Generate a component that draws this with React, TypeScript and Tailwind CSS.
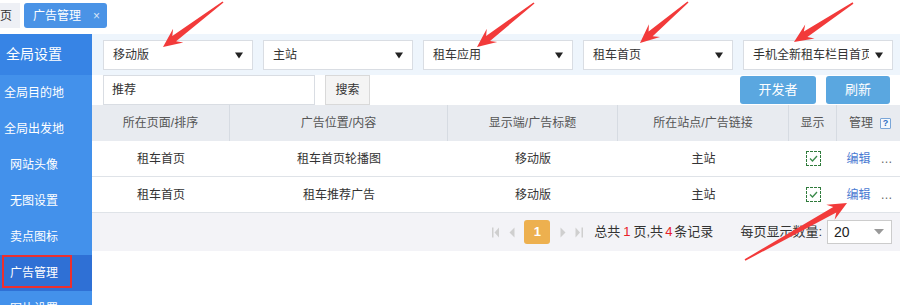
import React from "react";

const FONT = '"Liberation Sans", "Noto Sans CJK SC", sans-serif';

function arrowPoints(tx: number, ty: number, px: number, py: number) {
  const headLen = 19;
  const wing = 8.5;
  const neck = 3.2;
  const tail = 0.8;
  const dx = px - tx;
  const dy = py - ty;
  const L = Math.hypot(dx, dy);
  const ux = dx / L;
  const uy = dy / L;
  const nx = -uy;
  const ny = ux;
  const wx = px - ux * headLen;
  const wy = py - uy * headLen;
  const kx = px - ux * (headLen - 5);
  const ky = py - uy * (headLen - 5);
  const pts = [
    [tx + nx * tail, ty + ny * tail],
    [kx + nx * neck, ky + ny * neck],
    [wx + nx * wing, wy + ny * wing],
    [px, py],
    [wx - nx * wing, wy - ny * wing],
    [kx - nx * neck, ky - ny * neck],
    [tx - nx * tail, ty - ny * tail],
  ];
  return pts.map((p) => `${p[0].toFixed(1)},${p[1].toFixed(1)}`).join(" ");
}

const arrows: [number, number, number, number][] = [
  [223, 2, 163, 47],
  [534, 3, 477, 47],
  [688, 2, 640, 43],
  [853, 3, 794, 42],
  [745, 260, 847, 203],
];

function Caret() {
  return (
    <svg width="8" height="7" viewBox="0 0 8 7" className="shrink-0">
      <path d="M0 0.5 H8 L4 6.5 Z" fill="#222" />
    </svg>
  );
}

function Select({ label }: { label: string }) {
  return (
    <div className="w-[150px] h-[30px] bg-white border border-[#d9dde3] flex items-center pl-[9px] pr-[9px] text-[12px] text-[#333]">
      <div className="flex-1 overflow-hidden whitespace-nowrap">{label}</div>
      <div className="ml-[6px]">
        <Caret />
      </div>
    </div>
  );
}

const sideItems = ["全局目的地", "全局出发地", "网站头像", "无图设置", "卖点图标", "广告管理", "图片设置"];

function Check() {
  return (
    <div className="w-[15px] h-[15px] border border-dashed border-[#2f7a3b] flex items-center justify-center">
      <svg width="9" height="7" viewBox="0 0 9 7">
        <path d="M1 3.5 L3.5 6 L8 1" stroke="#3a8a4a" strokeWidth="1.3" fill="none" />
      </svg>
    </div>
  );
}

const rows = [
  ["租车首页", "租车首页轮播图", "移动版", "主站"],
  ["租车首页", "租车推荐广告", "移动版", "主站"],
];

export default function App() {
  return (
    <div className="relative w-[900px] h-[305px] overflow-hidden bg-white" style={{ fontFamily: FONT }}>
      {/* tab bar */}
      <div className="h-[34px] flex items-start pt-[3px]">
        <div className="w-[20px] h-[25px] bg-[#eef0f5] flex items-center justify-end pr-[8px] text-[12px] text-[#333]">页</div>
        <div className="ml-[4px] w-[83px] h-[25px] rounded-[3px] bg-[#4a93e6] flex items-center pl-[9px] text-[12px] text-white">
          <span>广告管理</span>
          <span className="ml-[12px] text-[12px] text-[#d6e6f8]">×</span>
        </div>
      </div>

      <div className="flex h-[271px]">
        {/* sidebar */}
        <div className="w-[92px] shrink-0 bg-[#4391eb] text-white">
          <div className="h-[41px] bg-[#3784e5] flex items-center">
            <div className="w-[68px] text-center text-[14px]">全局设置</div>
          </div>
          {sideItems.map((s, i) => (
            <div
              key={s}
              className={
                "relative h-[36px] flex items-center text-[12px] " + (i === 5 ? "bg-[#2f70d5]" : "")
              }
            >
              <div className="w-[68px] text-center">{s}</div>
              {i === 5 && (
                <div className="absolute left-[2px] top-0 w-[70px] h-[33px] border-[2.5px] border-[#ec2f2f]" />
              )}
            </div>
          ))}
        </div>

        {/* main */}
        <div className="flex-1 flex flex-col">
          <div className="h-[41px] bg-[#eef5fc] pl-[11px] pt-[6px] flex gap-[10px]">
            <Select label="移动版" />
            <Select label="主站" />
            <Select label="租车应用" />
            <Select label="租车首页" />
            <Select label="手机全新租车栏目首页" />
          </div>

          <div className="h-[30px] flex pl-[11px] pr-[10px]">
            <div className="w-[212px] h-[30px] border border-[#d9dde3] flex items-center pl-[8px] text-[12px] text-[#333]">推荐</div>
            <div className="ml-[10px] w-[45px] h-[30px] bg-[#f4f4f4] border border-[#d9d9d9] flex items-center justify-center text-[12px] text-[#333]">搜索</div>
            <div className="flex-1" />
            <div className="mt-[1px] w-[76px] h-[28px] rounded-[3px] bg-[#5aa7e0] flex items-center justify-center text-[13px] text-white">开发者</div>
            <div className="mt-[1px] ml-[10px] w-[64px] h-[28px] rounded-[3px] bg-[#5aa7e0] flex items-center justify-center text-[13px] text-white">刷新</div>
          </div>

          {/* table header */}
          <div className="grid grid-cols-[138px_218px_170px_171px_48px_63px] h-[36px] bg-[#e8ebf0] text-[12px] text-[#555]">
            <div className="flex items-center justify-center border-r border-[#d6dbe2]">所在页面/排序</div>
            <div className="flex items-center justify-center border-r border-[#d6dbe2]">广告位置/内容</div>
            <div className="flex items-center justify-center border-r border-[#d6dbe2]">显示端/广告标题</div>
            <div className="flex items-center justify-center border-r border-[#d6dbe2]">所在站点/广告链接</div>
            <div className="flex items-center justify-center border-r border-[#d6dbe2]">显示</div>
            <div className="flex items-center justify-center gap-[7px] pl-[3px]">
              <span>管理</span>
              <span className="w-[11px] h-[11px] border border-[#7aa6d8] bg-[#f4f8fd] rounded-[1px] flex items-center justify-center text-[9px] font-bold text-[#2d6fc4] leading-none">?</span>
            </div>
          </div>

          {rows.map((r, i) => (
            <div
              key={i}
              className="grid grid-cols-[138px_218px_170px_171px_48px_63px] h-[36px] border-b border-[#dfe3e8] text-[12px] text-[#333]"
            >
              <div className="flex items-center justify-center">{r[0]}</div>
              <div className="flex items-center justify-center">{r[1]}</div>
              <div className="flex items-center justify-center">{r[2]}</div>
              <div className="flex items-center justify-center">{r[3]}</div>
              <div className="flex items-center justify-center">
                <Check />
              </div>
              <div className="flex items-center justify-center gap-[10px] pl-[2px]">
                <span className="text-[#4a7bd2]">编辑</span>
                <span className="text-[#666]">…</span>
              </div>
            </div>
          ))}

          {/* pagination */}
          <div className="h-[38px] bg-[#f3f3f7] flex items-center justify-end pr-[8px] text-[13px] text-[#333]">
            <svg width="8" height="11" viewBox="0 0 8 11">
              <rect x="0" y="0.5" width="1.5" height="10" fill="#cfcfcf" />
              <path d="M7 0.5 V10.5 L2.5 5.5 Z" fill="#cfcfcf" />
            </svg>
            <svg width="6" height="11" viewBox="0 0 6 11" className="ml-[9px]">
              <path d="M5.5 0.5 V10.5 L0.5 5.5 Z" fill="#cfcfcf" />
            </svg>
            <div className="ml-[9px] w-[26px] h-[24px] rounded-[3px] bg-[#edb04f] flex items-center justify-center text-[13px] font-bold text-white">1</div>
            <svg width="6" height="11" viewBox="0 0 6 11" className="ml-[10px]">
              <path d="M0.5 0.5 V10.5 L5.5 5.5 Z" fill="#cfcfcf" />
            </svg>
            <svg width="8" height="11" viewBox="0 0 8 11" className="ml-[9px]">
              <path d="M0.5 0.5 V10.5 L5 5.5 Z" fill="#cfcfcf" />
              <rect x="6.5" y="0.5" width="1.5" height="10" fill="#cfcfcf" />
            </svg>
            <div className="ml-[11px] whitespace-nowrap">
              总共<span className="mx-[3px] text-[#e8202a]">1</span>页,共<span className="mx-[2px] text-[#e8202a]">4</span>条记录
            </div>
            <div className="ml-[27px] whitespace-nowrap">每页显示数量:</div>
            <div className="ml-[5px] w-[65px] h-[24px] bg-white border border-[#cccccc] flex items-center pl-[6px] pr-[7px]">
              <span className="flex-1 text-[14px] text-[#222]">20</span>
              <svg width="10" height="6" viewBox="0 0 10 6">
                <path d="M0 0 H10 L5 5.5 Z" fill="#999" />
              </svg>
            </div>
          </div>
          <div className="flex-1 bg-white" />
        </div>
      </div>

      {/* annotation arrows */}
      <svg className="absolute left-0 top-0 pointer-events-none" width="900" height="305" viewBox="0 0 900 305">
        {arrows.map((a, i) => (
          <polygon key={i} points={arrowPoints(a[0], a[1], a[2], a[3])} fill="#f23a3a" />
        ))}
      </svg>
    </div>
  );
}
